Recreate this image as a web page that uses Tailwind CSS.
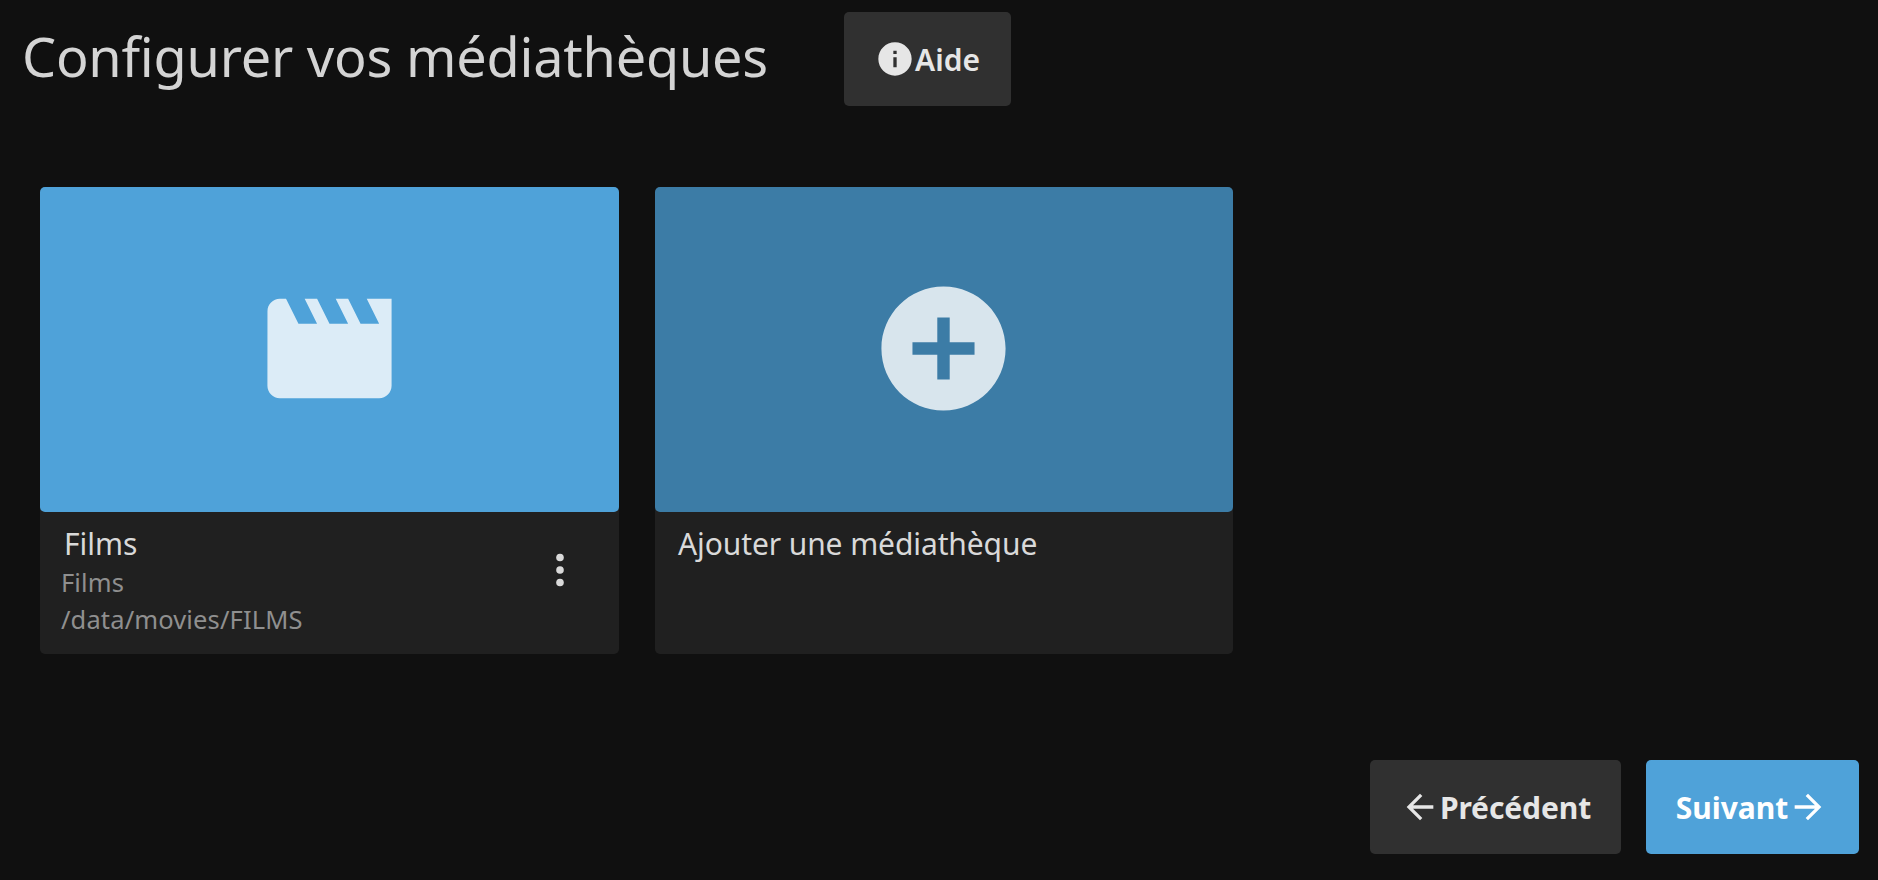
<!DOCTYPE html>
<html lang="fr">
	<head>
		<meta charset="UTF-8" />
		<title>Configurer vos médiathèques</title>
		<script src="https://cdn.jsdelivr.net/npm/@tailwindcss/browser@4"></script>
	</head>
	<body class="h-screen overflow-hidden bg-[#101010] font-['Noto_Sans',sans-serif] text-[#d9d9d9]">
		<div class="flex h-[118px] items-start pl-[22px] pt-3">
			<h1 class="mt-[14px] w-[745px] text-[54px] leading-[60px] font-normal tracking-[-0.22px] whitespace-nowrap text-[#d4d4d4]">Configurer vos médiathèques</h1>
			<button class="ml-[77px] flex h-[94px] w-[167px] items-center justify-center rounded-[5px] bg-[#303030] text-[30px] font-semibold text-[#e6e6e6]">
				<svg class="h-10 w-10" viewBox="0 0 24 24" fill="currentColor"><path d="M12 2C6.48 2 2 6.48 2 12s4.48 10 10 10 10-4.48 10-10S17.52 2 12 2zm1 15h-2v-6h2v6zm0-8h-2V7h2v2z" /></svg>
				<span>Aide</span>
			</button>
		</div>

		<div class="mt-[69px] flex gap-9 pl-10">
			<div class="h-[467px] w-[579px] rounded-[5px] bg-[#202020]">
				<div class="flex h-[325px] items-center justify-center rounded-[5px] bg-[#4fa2d9] pb-[2px]">
					<svg class="h-[149px] w-[149px] text-white/80" viewBox="0 0 24 24" fill="currentColor"><path d="M18 4l2 4h-3l-2-4h-2l2 4h-3l-2-4H8l2 4H7L5 4H4c-1.1 0-1.99.9-1.99 2L2 18c0 1.1.9 2 2 2h16c1.1 0 2-.9 2-2V4h-4z" /></svg>
				</div>
				<div class="relative pl-[21px] pt-[12px]">
					<div class="pl-[3px] text-[30px] leading-[40px]">Films</div>
					<div class="text-[25.5px] leading-[37px] tracking-[0.13px] text-[#8f8f8f]">Films</div>
					<div class="text-[25.5px] leading-[37px] tracking-[0.13px] text-[#8f8f8f]">/data/movies/FILMS</div>
					<svg class="absolute right-[54px] top-[40px] h-9 w-2.5 text-[#d9d9d9]" viewBox="0 0 10 36" fill="currentColor"><circle cx="5" cy="5.5" r="3.8" /><circle cx="5" cy="18" r="3.8" /><circle cx="5" cy="30.5" r="3.8" /></svg>
				</div>
			</div>

			<div class="h-[467px] w-[578px] rounded-[5px] bg-[#202020]">
				<div class="flex h-[325px] items-center justify-center rounded-[5px] bg-[#3c7ca6] pb-[2px] pr-[2px]">
					<svg class="h-[149px] w-[149px] text-white/80" viewBox="0 0 24 24" fill="currentColor"><path d="M12 2C6.48 2 2 6.48 2 12s4.48 10 10 10 10-4.48 10-10S17.52 2 12 2zm5 11h-4v4h-2v-4H7v-2h4V7h2v4h4v2z" /></svg>
				</div>
				<div class="pl-[23px] pt-[12px] text-[30px] leading-[40px] tracking-[-0.1px]">Ajouter une médiathèque</div>
			</div>
		</div>

		<div class="mt-[106px] flex justify-end gap-[25px] pr-[19px]">
			<button class="flex h-[94px] w-[251px] items-center justify-center rounded-[5px] bg-[#303030] text-[30px] font-bold tracking-[-0.1px] text-[#e6e6e6]">
				<svg class="h-10 w-10" viewBox="0 0 24 24" fill="currentColor"><path d="M20 11H7.83l5.59-5.59L12 4l-8 8 8 8 1.41-1.41L7.83 13H20v-2z" /></svg>
				<span>Précédent</span>
			</button>
			<button class="flex h-[94px] w-[213px] items-center justify-center rounded-[5px] bg-[#4fa2d9] pr-[1px] text-[30px] font-bold text-white">
				<span>Suivant</span>
				<svg class="h-10 w-10" viewBox="0 0 24 24" fill="currentColor"><path d="M12 4l-1.41 1.41L16.17 11H4v2h12.17l-5.58 5.59L12 20l8-8z" /></svg>
			</button>
		</div>
	</body>
</html>
